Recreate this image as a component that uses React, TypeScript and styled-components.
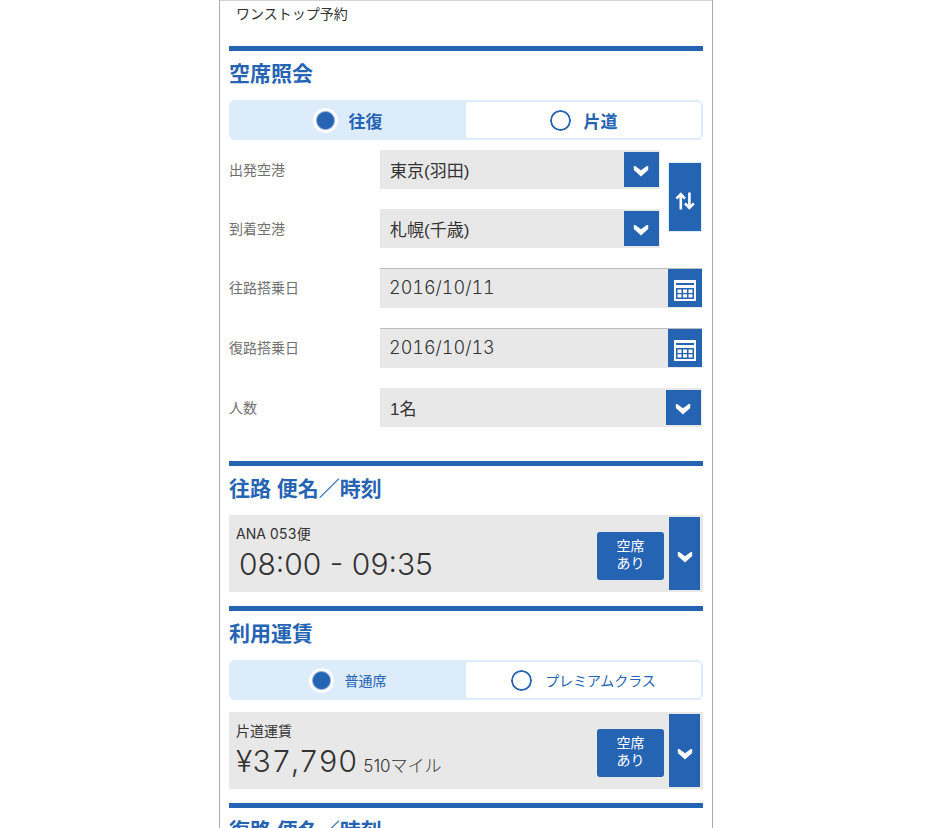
import React, { useId, useState } from "react";
import styled, { createGlobalStyle, css } from "styled-components";

const BLUE = "#2563b3";
const PALE = "#dcecfb";
const GREY = "#e8e8e8";

const GlobalStyle = createGlobalStyle`
  *, *::before, *::after { box-sizing: border-box; }
  body {
    margin: 0;
    background: #fff;
    color: #333;
    font-family: "Liberation Sans", "Noto Sans CJK JP", sans-serif;
  }
  button, input, select {
    font: inherit;
    color: inherit;
    margin: 0;
  }
`;

const numerals = css`
  font-family: Inter, "Noto Sans CJK JP", sans-serif;
`;

const Page = styled.div`
  display: flex;
  justify-content: center;
  height: 100vh;
  overflow-y: auto;
  scrollbar-width: none;
  padding-left: 2px;
`;

const Screen = styled.main`
  flex: 1;
  max-width: 494px;
  height: max-content;
  min-height: 100%;
  padding: 0 9px;
  border: solid #a9a9a9;
  border-width: 0 1px;
  box-shadow: inset 0 1px #d4d4d4;
`;

const PageTitle = styled.h1`
  margin: 0;
  padding: 4px 7px 22px;
  font-size: 14px;
  line-height: 20px;
  font-weight: 400;
`;

const Section = styled.section<{ $space?: number }>`
  border-top: 5px solid ${BLUE};
  padding-bottom: ${(p) => p.$space ?? 14}px;
`;

const Heading = styled.h2`
  margin: 0;
  padding: 7px 0 10px;
  color: ${BLUE};
  font-size: 21px;
  line-height: 32px;
  font-weight: 700;
`;

const Segments = styled.div<{ $space: number }>`
  display: grid;
  grid-template-columns: 1fr 1fr;
  height: 40px;
  margin-bottom: ${(p) => p.$space}px;
  padding: 2px;
  border-radius: 6px;
  background: ${PALE};
`;

const Segment = styled.label<{ $strong?: boolean }>`
  display: flex;
  align-items: center;
  justify-content: center;
  gap: 11px;
  padding-right: 2px;
  border-radius: 3px;
  color: ${BLUE};
  cursor: pointer;
  font-size: ${(p) => (p.$strong ? 17 : 14)}px;
  font-weight: ${(p) => (p.$strong ? 700 : 400)};
  &:has(input:not(:checked)) { background: #fff; }
`;

const Radio = styled.input`
  appearance: none;
  width: 25px;
  height: 25px;
  border: 2px solid #fff;
  border-radius: 50%;
  background: radial-gradient(circle, #fff 8px, ${BLUE} 9px, ${BLUE} 10px, #fff 11px);
  &:checked {
    background: radial-gradient(circle, ${BLUE} 8px, #fff 10px);
  }
`;

const Fields = styled.div`
  display: flex;
  flex-direction: column;
  gap: 20px;
  padding-right: 1px;
`;

const Airports = styled.div`
  display: grid;
  grid-template-columns: 1fr 34px;
  gap: 8px;
`;

const AirportFields = styled.div`
  display: flex;
  flex-direction: column;
  gap: 20px;
`;

const Field = styled.div`
  display: grid;
  grid-template-columns: 151px minmax(0, 1fr);
  align-items: center;
`;

const Label = styled.label`
  color: #707070;
  font-size: 14px;
  line-height: 20px;
`;

const Control = styled.div`
  display: grid;
  align-items: center;
  justify-items: end;
  & > * { grid-area: 1 / 1; }
`;

const inputLook = css`
  appearance: none;
  width: 100%;
  border: 0;
  border-radius: 0;
  background: ${GREY};
`;

const Select = styled.select`
  ${inputLook}
  height: 39px;
  padding: 3px 44px 0 10px;
  font-size: 17px;
`;

const DateInput = styled.input`
  ${inputLook}
  ${numerals}
  height: 40px;
  padding: 0 44px 2px 9px;
  border-top: 1px solid #bdbdbd;
  font-size: 18px;
  font-weight: 300;
  font-variant-numeric: tabular-nums;
`;

const SelectArrow = styled.span`
  display: grid;
  place-items: center;
  width: 35px;
  height: 35px;
  margin-right: 1px;
  padding: 3px 1px 0 0;
  background: ${BLUE};
  pointer-events: none;
`;

const BlueButton = styled.button`
  display: grid;
  place-items: center;
  padding: 0;
  border: 0;
  background: ${BLUE};
  color: #fff;
  cursor: pointer;
`;

const CalendarButton = styled(BlueButton)`
  width: 34px;
  height: 38px;
  padding-top: 4px;
`;

const SwapButton = styled(BlueButton)`
  height: 70px;
  margin-top: 12px;
  padding-top: 8px;
  border: 1px solid ${PALE};
`;

const Card = styled.div`
  display: flex;
  align-items: center;
  gap: 5px;
  min-height: 77px;
  padding: 2px 3px 2px 7px;
  background: ${GREY};
`;

const CardText = styled.div`
  ${numerals}
  flex: 1;
  min-width: 0;
`;

const Caption = styled.div`
  font-size: 14px;
  line-height: 20px;
  font-variant-numeric: tabular-nums;
`;

const Figure = styled.div<{ $inset?: boolean }>`
  display: flex;
  align-items: baseline;
  gap: 6px;
  padding-left: ${(p) => (p.$inset ? 3 : 0)}px;
  font-size: 30px;
  line-height: 40px;
  font-weight: 300;
  white-space: nowrap;
`;

const Price = styled.span`
  font-variant-numeric: tabular-nums;
`;

const Miles = styled.span`
  font-size: 17px;
  line-height: 20px;
`;

const Badge = styled.span`
  width: 67px;
  margin-top: 5px;
  padding: 6px 0 8px;
  border-radius: 3px;
  background: ${BLUE};
  color: #fff;
  font-size: 14px;
  line-height: 17px;
  text-align: center;
`;

const OpenButton = styled(BlueButton)`
  align-self: stretch;
  width: 31px;
  padding-top: 6px;
`;

function Chevron() {
  return (
    <svg width="16" height="12" viewBox="0 0 16 12" aria-hidden="true">
      <path d="M.8 1H2.2L8 5.2 13.8 1H15.2V5L8 11.6.8 5Z" fill="#fff" />
    </svg>
  );
}

function Swap() {
  return (
    <svg width="20" height="18" viewBox="0 0 20 18" fill="none" stroke="#fff" strokeWidth="2.6" aria-hidden="true">
      <path d="M5.8 17.4V2M1.4 6.6 5.8 2.2 10 6.6M14.4.4V16M10 11.4l4.4 4.4 4.4-4.4" />
    </svg>
  );
}

function Calendar() {
  return (
    <svg width="22" height="21" viewBox="0 0 22 21" aria-hidden="true">
      <path d="M0 0H22V21H0Z" fill="#fff" />
      <path d="M2 3H20V5H2Z M2 8H20V19H2Z" fill={BLUE} />
      <path
        d="M3.5 9.5H7.5V13H3.5zM9 9.5H13V13H9zM14.5 9.5H18.5V13H14.5zM3.5 14.3H7.5V17.6H3.5zM9 14.3H13V17.6H9zM14.5 14.3H18.5V17.6H14.5z"
        fill="#fff"
      />
    </svg>
  );
}

function Choice({ name, options, strong }: { name: string; options: string[]; strong?: boolean }) {
  return (
    <Segments role="radiogroup" aria-label={name} $space={strong ? 10 : 12}>
      {options.map((option, i) => (
        <Segment key={option} $strong={strong}>
          <Radio type="radio" name={name} defaultChecked={i === 0} />
          {option}
        </Segment>
      ))}
    </Segments>
  );
}

function SelectField(props: { label: string; options: string[]; value: string; onChange: (v: string) => void }) {
  const id = useId();
  return (
    <Field>
      <Label htmlFor={id}>{props.label}</Label>
      <Control>
        <Select id={id} value={props.value} onChange={(e) => props.onChange(e.target.value)}>
          {props.options.map((o) => (
            <option key={o}>{o}</option>
          ))}
        </Select>
        <SelectArrow>
          <Chevron />
        </SelectArrow>
      </Control>
    </Field>
  );
}

function DateField({ label, value }: { label: string; value: string }) {
  const id = useId();
  return (
    <Field>
      <Label htmlFor={id}>{label}</Label>
      <Control>
        <DateInput id={id} type="text" defaultValue={value} />
        <CalendarButton type="button" aria-label="カレンダー">
          <Calendar />
        </CalendarButton>
      </Control>
    </Field>
  );
}

function ResultCard({ caption, children, inset }: { caption: string; children: React.ReactNode; inset?: boolean }) {
  return (
    <Card>
      <CardText>
        <Caption>{caption}</Caption>
        <Figure $inset={inset}>{children}</Figure>
      </CardText>
      <Badge>
        空席
        <br />
        あり
      </Badge>
      <OpenButton type="button" aria-label="開く">
        <Chevron />
      </OpenButton>
    </Card>
  );
}

const AIRPORTS = ["東京(羽田)", "札幌(千歳)"];

export default function App() {
  const [from, setFrom] = useState(AIRPORTS[0]);
  const [to, setTo] = useState(AIRPORTS[1]);
  const [people, setPeople] = useState("1名");
  const swap = () => {
    setFrom(to);
    setTo(from);
  };

  return (
    <>
      <GlobalStyle />
      <Page>
        <Screen>
          <PageTitle>ワンストップ予約</PageTitle>
          <Section $space={34}>
            <Heading>空席照会</Heading>
            <Choice name="旅程" options={["往復", "片道"]} strong />
            <Fields>
              <Airports>
                <AirportFields>
                  <SelectField label="出発空港" options={AIRPORTS} value={from} onChange={setFrom} />
                  <SelectField label="到着空港" options={AIRPORTS} value={to} onChange={setTo} />
                </AirportFields>
                <SwapButton type="button" aria-label="入れ替え" onClick={swap}>
                  <Swap />
                </SwapButton>
              </Airports>
              <DateField label="往路搭乗日" value="2016/10/11" />
              <DateField label="復路搭乗日" value="2016/10/13" />
              <SelectField label="人数" options={["1名", "2名", "3名"]} value={people} onChange={setPeople} />
            </Fields>
          </Section>
          <Section>
            <Heading>往路 便名／時刻</Heading>
            <ResultCard caption="ANA 053便" inset>
              08:00 - 09:35
            </ResultCard>
          </Section>
          <Section>
            <Heading>利用運賃</Heading>
            <Choice name="座席" options={["普通席", "プレミアムクラス"]} />
            <ResultCard caption="片道運賃">
              <Price>¥37,790</Price>
              <Miles>510マイル</Miles>
            </ResultCard>
          </Section>
          <Section>
            <Heading>復路 便名／時刻</Heading>
          </Section>
        </Screen>
      </Page>
    </>
  );
}
